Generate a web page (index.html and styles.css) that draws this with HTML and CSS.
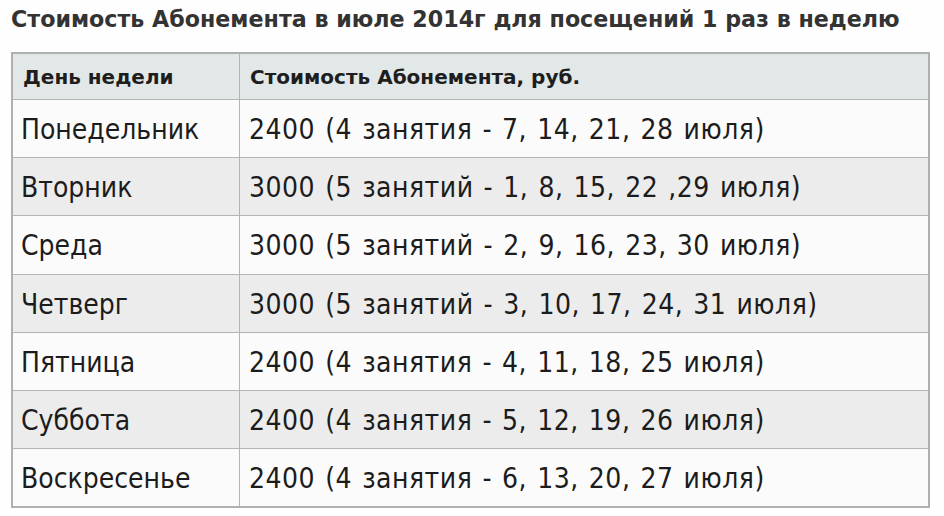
FILE: index.html
```html
<!DOCTYPE html>
<html lang="ru">
<head>
<meta charset="utf-8">
<link rel="stylesheet" href="styles.css">
</head>
<body>
<div class="page">
  <h1 class="title">Стоимость Абонемента в июле 2014г для посещений 1 раз в неделю</h1>
  <table class="price">
    <thead>
      <tr><th class="day">День недели</th><th>Стоимость Абонемента, руб.</th></tr>
    </thead>
    <tbody>
      <tr><td class="day">Понедельник</td><td class="cost">2400 (4 занятия - 7, 14, 21, 28 июля)</td></tr>
      <tr><td class="day">Вторник</td><td class="cost">3000 (5 занятий - 1, 8, 15, 22 ,29 июля)</td></tr>
      <tr><td class="day">Среда</td><td class="cost">3000 (5 занятий - 2, 9, 16, 23, 30 июля)</td></tr>
      <tr><td class="day">Четверг</td><td class="cost">3000 (5 занятий - 3, 10, 17, 24, 31 июля)</td></tr>
      <tr><td class="day">Пятница</td><td class="cost">2400 (4 занятия - 4, 11, 18, 25 июля)</td></tr>
      <tr><td class="day">Суббота</td><td class="cost">2400 (4 занятия - 5, 12, 19, 26 июля)</td></tr>
      <tr><td class="day">Воскресенье</td><td class="cost">2400 (4 занятия - 6, 13, 20, 27 июля)</td></tr>
    </tbody>
  </table>
  <p class="after">И</p>
</div>
</body>
</html>
```

FILE: styles.css
```css
html, body {
  margin: 0;
  padding: 0;
  background: #fefefe;
}
.page {
  width: 944px;
  height: 516px;
  overflow: hidden;
  padding: 0 0 0 11px;
  box-sizing: border-box;
  font-family: "DejaVu Sans", Verdana, sans-serif;
  color: #222;
}
.title {
  margin: 0;
  padding: 5px 0 0 0;
  font-size: 22.2px;
  line-height: 28px;
  font-weight: bold;
  color: #333;
  height: 52px;
  box-sizing: border-box;
}
.price {
  border-collapse: collapse;
  width: 919px;
  border: 2px solid #b0b0b0;
  table-layout: fixed;
}
.price th, .price td {
  border: 1px solid #b4b4b4;
  text-align: left;
  padding: 0 0 0 9px;
  white-space: nowrap;
}
.price th {
  background: #e2e8e8;
  height: 45px;
  line-height: 24px;
  font-size: 20px;
  font-weight: bold;
  color: #1e1e1e;
  padding-left: 10px;
}
.price td {
  height: 58.2px;
  box-sizing: border-box;
  font-family: "DejaVu Sans Condensed", "DejaVu Sans", sans-serif;
  font-stretch: semi-condensed;
  font-size: 28px;
  line-height: 32px;
  font-weight: normal;
  color: #1c1c1c;
  padding-top: 3px;
  padding-bottom: 0;
}
.price td.day {
  padding-left: 8px;
}
.price td.cost {
  letter-spacing: 0.5px;
  word-spacing: 1.6px;
  padding-left: 9px;
}
.price .day {
  width: 216px;
}
.price tbody tr:nth-child(odd) td {
  background: #fbfbfb;
}
.price tbody tr:nth-child(even) td {
  background: #ececec;
}
.after {
  margin: 4px 0 0 0;
  font-size: 20px;
  line-height: 24px;
  color: #333;
}
```
